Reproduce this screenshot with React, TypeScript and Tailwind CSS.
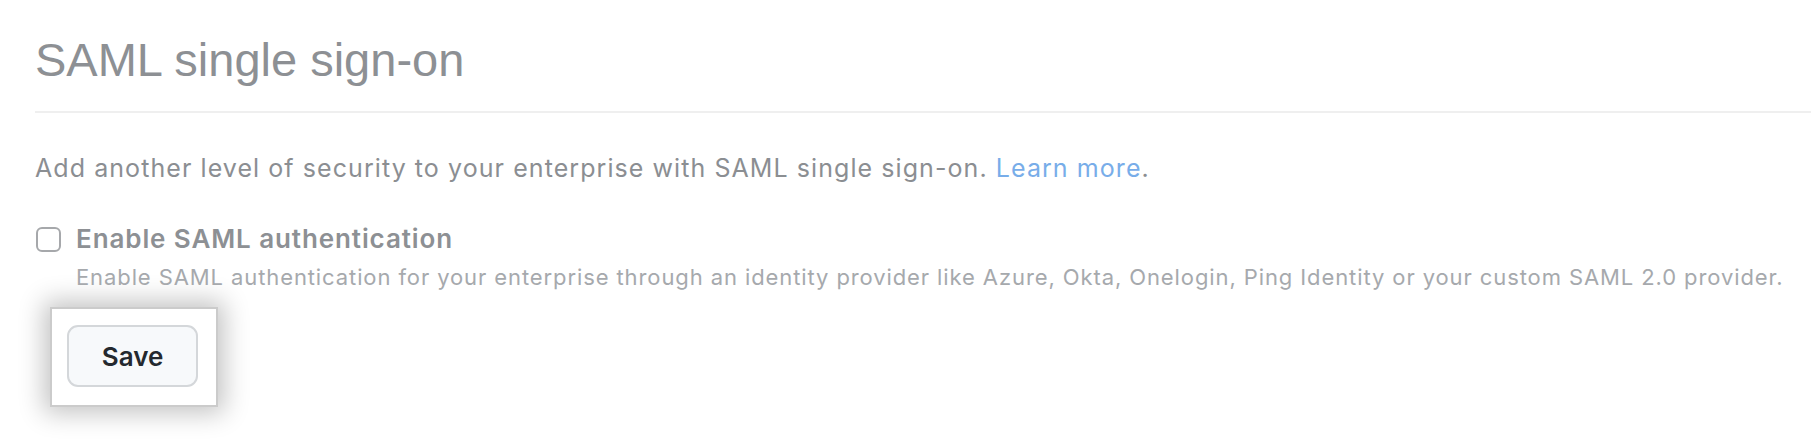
import React from 'react';

const App: React.FC = () => {
    return (
        <div className="h-[448px] w-full bg-white pt-[32px] pl-[35px] overflow-hidden" style={{ fontFamily: '"Liberation Sans", Arial, sans-serif' }}>
            <h2 className="text-[47px] leading-[56px] font-normal text-[#8d9094] pb-[23px] border-b-[2px] border-[#efefef]">
                SAML single sign-on
            </h2>

            <div className="font-['Inter',sans-serif]">
                <p className="mt-[40px] text-[25px] leading-[30px] text-[#8b8e92] tracking-[1.07px]">
                    Add another level of security to your enterprise with SAML single sign-on.{' '}
                    <a href="#" className="text-[#78ade9]">Learn more</a>.
                </p>

                <div className="mt-[41px] flex items-start">
                    <div className="mt-[3px] ml-px w-[25px] h-[25px] rounded-[6px] border-[2px] border-[#a6a8ab] bg-white shrink-0" />
                    <div className="ml-[15px]">
                        <div className="text-[26px] leading-[30px] font-semibold text-[#8d9094] tracking-[0.9px]">
                            Enable SAML authentication
                        </div>
                        <div className="mt-[9px] text-[22px] leading-[28px] text-[#a6a9ad] tracking-[0.9px] whitespace-nowrap">
                            Enable SAML authentication for your enterprise through an identity provider like Azure, Okta, Onelogin, Ping Identity or your custom SAML 2.0 provider.
                        </div>
                    </div>
                </div>

                <div className="mt-[16px] ml-[15px] w-[168px] h-[100px] bg-white border-[2px] border-[#cbcbcb] shadow-[0_0_24px_6px_rgba(0,0,0,0.24)] pl-[15px] pt-[16px]">
                    <button className="w-[131px] h-[62px] rounded-[11px] border-[2px] border-[#d4d7da] bg-[#f7f9fb] text-[26px] font-semibold text-[#24292f]">
                        Save
                    </button>
                </div>
            </div>
        </div>
    );
};

export default App;
